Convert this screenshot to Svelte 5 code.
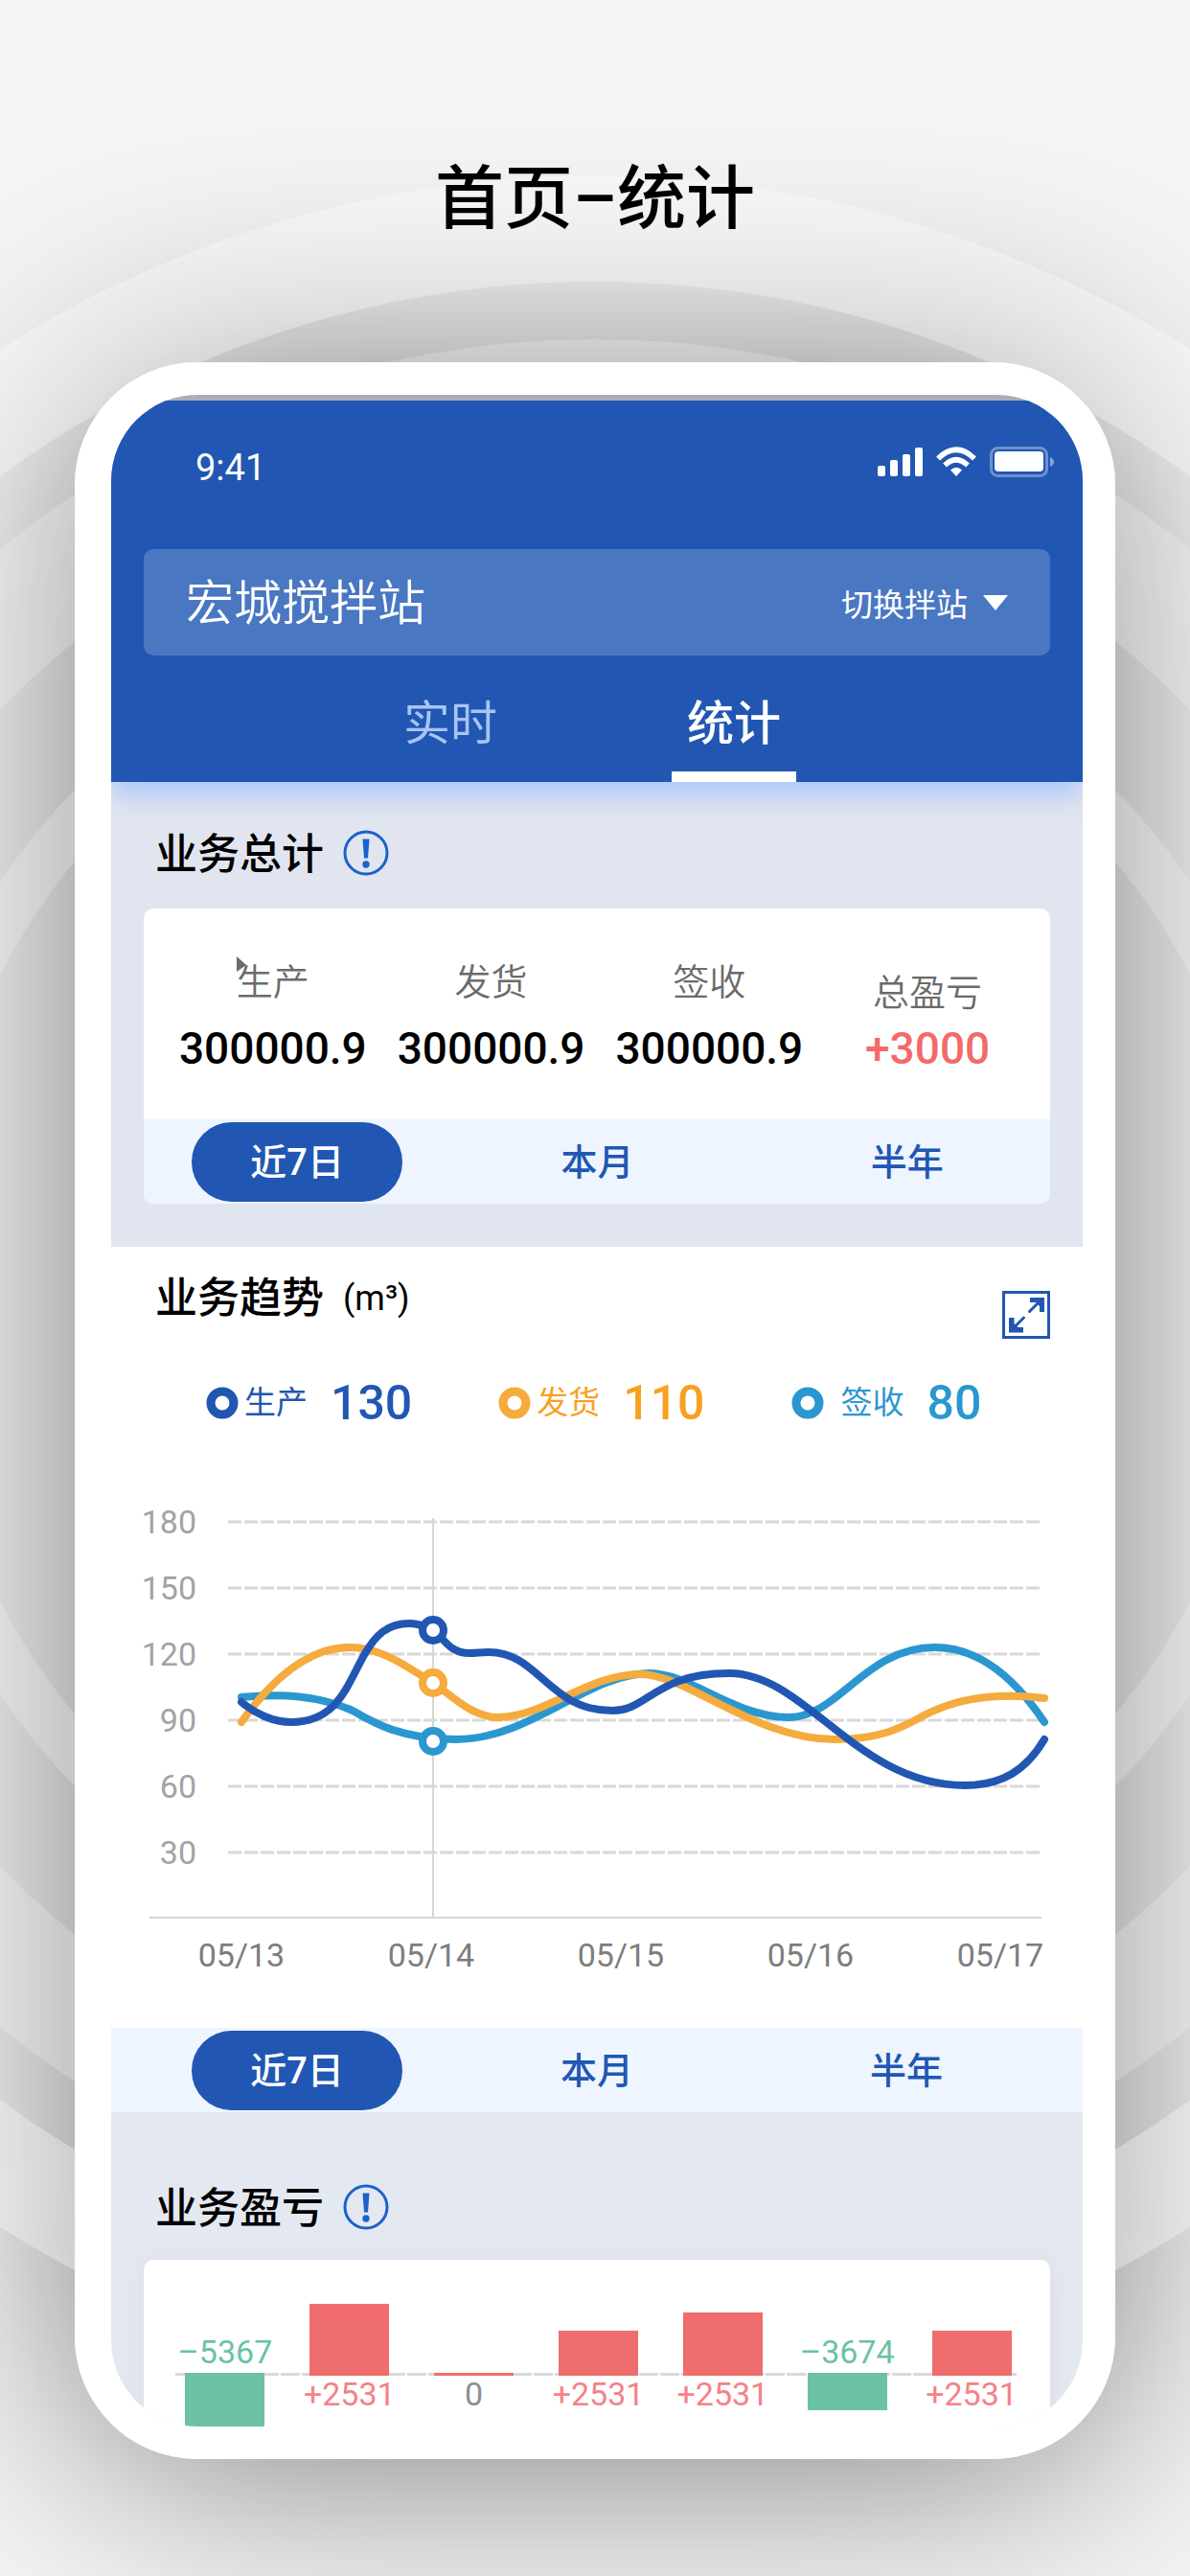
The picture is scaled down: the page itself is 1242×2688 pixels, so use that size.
<script lang="ts">
	interface Stat {
		label: string;
		value: string;
		total?: boolean;
	}

	interface Series {
		name: string;
		value: number;
		color: string;
		ring: string;
		path: string;
		y: number;
		wide?: boolean;
	}

	interface Profit {
		id: number;
		label: string;
		size: number;
		kind: 'gain' | 'loss' | 'zero';
	}

	const ranges: string[] = ['近7日', '本月', '半年'];
	const tabs: string[] = ['实时', '统计'];

	const stats: Stat[] = [
		{ label: '生产', value: '300000.9' },
		{ label: '发货', value: '300000.9' },
		{ label: '签收', value: '300000.9' },
		{ label: '总盈亏', value: '+3000', total: true }
	];

	const series: Series[] = [
		{
			name: '生产',
			value: 130,
			color: '#2157b2',
			ring: '#2157b2',
			y: 141,
			path: 'M136 216C150 228 169 237 188 237C236 237 246 199 264 167C276 146 288 134 312 134C320 134 326 136 336 141C347 148 352 165 374 165C382 165 386 164 394 164C447 164 456 225 523 225C561 225 567 186 645 186C725 186 778 303 891 303C930 303 955 287 974 255'
		},
		{
			name: '发货',
			value: 110,
			color: '#f8a01f',
			ring: '#f5ab3d',
			y: 196,
			path: 'M136 237C168 192 205 159 249 159C284 159 312 182 336 196C360 213 378 232 404 232C452 232 498 187 552 187C602 187 671 255 755 255C817 255 836 234 859 225C890 211 930 207 974 212'
		},
		{
			name: '签收',
			value: 80,
			color: '#2b97d0',
			ring: '#2b97d0',
			y: 257,
			wide: true,
			path: 'M136 211C178 207 216 209 252 225C274 238 304 255 360 255C438 255 498 186 562 186C605 186 650 232 707 232C760 232 786 159 860 159C905 159 943 191 974 237'
		}
	];

	const levels: number[] = [180, 150, 120, 90, 60, 30];
	const dates: string[] = ['05/13', '05/14', '05/15', '05/16', '05/17'];

	const profits: Profit[] = [
		{ id: 1, label: '–5367', size: 56, kind: 'loss' },
		{ id: 2, label: '+2531', size: 75, kind: 'gain' },
		{ id: 3, label: '0', size: 3, kind: 'zero' },
		{ id: 4, label: '+2531', size: 47, kind: 'gain' },
		{ id: 5, label: '+2531', size: 66, kind: 'gain' },
		{ id: 6, label: '–3674', size: 39, kind: 'loss' },
		{ id: 7, label: '+2531', size: 47, kind: 'gain' }
	];

	let activeTab: string = $state('统计');
	let totalRange: string = $state('近7日');
	let trendRange: string = $state('近7日');
</script>

{#snippet infoButton(name: string)}
	<button type="button" class="info" aria-label={name}>
		<svg viewBox="0 0 48 48" aria-hidden="true">
			<circle cx="24" cy="24" r="22" fill="none" stroke="currentColor" stroke-width="3" />
			<path d="M20.500 9.500h7l-1.500 20h-4z" fill="currentColor" />
			<circle cx="24" cy="36" r="3.700" fill="currentColor" />
		</svg>
	</button>
{/snippet}

{#snippet ring(color: string)}
	<svg class="ring" viewBox="0 0 34 34" aria-hidden="true">
		<circle cx="17" cy="17" r="12" fill="#fff" stroke={color} stroke-width="9" />
	</svg>
{/snippet}

<div class="page">
	<svg class="waves" viewBox="0 0 2400 2400" aria-hidden="true">
		<circle cx="1200" cy="1200" r="1105" stroke-width="110" stroke-opacity="0.32" />
		<circle cx="1200" cy="1200" r="928" stroke-width="124" stroke-opacity="0.2" />
		<circle cx="1200" cy="1200" r="727" stroke-width="50" stroke-opacity="0.2" />
	</svg>

	<h1>首页–统计</h1>

	<main class="device">
		<div class="screen">
			<header class="top">
				<div class="status">
					<time>9:41</time>
					<svg class="status-icons" viewBox="0 0 184 32" aria-hidden="true">
						<g fill="#fff">
							<rect x="0" y="20" width="8" height="11" rx="2" />
							<rect x="13" y="14" width="8" height="17" rx="2" />
							<rect x="26" y="8" width="8" height="23" rx="2" />
							<rect x="39" y="1" width="8" height="30" rx="2" />
							<path d="M82 31l-6-6.500q6-5.500 12 0z" />
						</g>
						<g fill="none" stroke="#fff" stroke-width="5.500">
							<path d="M63 12.500Q82-6 101 12.500" />
							<path d="M70 19.500Q82 8 94 19.500" />
						</g>
						<rect
							x="118.500" y="1.500" width="58" height="29" rx="7"
							fill="none" stroke="#fff" stroke-opacity="0.35" stroke-width="3"
						/>
						<rect x="122" y="5" width="51" height="21" rx="4" fill="#fff" />
						<path d="M180 11q4 2 4 5t-4 5z" fill="#fff" fill-opacity="0.45" />
					</svg>
				</div>

				<div class="station">
					<span class="station-name">宏城搅拌站</span>
					<button type="button" class="switch">
						切换拌站
						<svg viewBox="0 0 26 16" aria-hidden="true"><path d="M0 0h26L13 16z" fill="#fff" /></svg>
					</button>
				</div>

				<nav class="tabs">
					{#each tabs as tab (tab)}
						<button
							type="button"
							class:active={tab === activeTab}
							onclick={() => (activeTab = tab)}
						>
							{tab}
						</button>
					{/each}
				</nav>
			</header>

			<section class="totals">
				<div class="heading">
					<h2>业务总计</h2>
					{@render infoButton('业务总计')}
				</div>
				<div class="card">
					<div class="stats">
						{#each stats as stat (stat.label)}
							<div class="stat" class:total={stat.total}>
								<span class="stat-label">{stat.label}</span>
								<strong>{stat.value}</strong>
							</div>
						{/each}
						<svg class="pointer" viewBox="0 0 10 16" aria-hidden="true">
							<path d="M0 0l10 9L0 16z" fill="#6b6b6b" />
						</svg>
					</div>
					<div class="ranges">
						{#each ranges as range (range)}
							<button
								type="button"
								class:active={range === totalRange}
								onclick={() => (totalRange = range)}
							>
								{range}
							</button>
						{/each}
					</div>
				</div>
			</section>

			<section class="trend">
				<div class="trend-head">
					<div class="heading">
						<h2>业务趋势</h2>
						<span class="unit">(m³)</span>
					</div>
					<button type="button" class="expand" aria-label="全屏">
						<svg viewBox="0 0 50 50" aria-hidden="true">
							<rect x="1.500" y="1.500" width="47" height="47" fill="none" stroke="currentColor" stroke-width="3" />
							<path d="M28.500 21.500L39 11M22.500 28L12 38.500" stroke="currentColor" stroke-width="3" stroke-linecap="round" />
							<path d="M29 7h15v15h-5v-6l-4-4h-6zM7 28h5.500v6l4 4H22v5.500H7z" fill="currentColor" />
						</svg>
					</button>
				</div>

				<ul class="legend">
					{#each series as item (item.name)}
						<li class:wide={item.wide} style:color={item.color}>
							{@render ring(item.ring)}
							<span>{item.name}</span>
							<strong>{item.value}</strong>
						</li>
					{/each}
				</ul>

				<svg class="chart" viewBox="0 0 1014 556" role="img" aria-label="业务趋势">
					{#each levels as level, i (level)}
						<line class="grid" x1="122" x2="971" y1={28 + i * 69} y2={28 + i * 69} />
						<text class="level" x="89" y={40 + i * 69}>{level}</text>
					{/each}
					<line class="axis" x1="40" x2="971" y1="441" y2="441" />
					<line class="axis" x1="336" x2="336" y1="24" y2="441" />
					{#each dates as date, i (date)}
						<text class="date" x={136 + i * 198} y="492">{date}</text>
					{/each}
					{#each [...series].reverse() as item (item.name)}
						<path class="curve" d={item.path} stroke={item.ring} />
					{/each}
					{#each series as item (item.name)}
						<circle cx="336" cy={item.y} r="11" fill="#fff" stroke={item.ring} stroke-width="8" />
					{/each}
				</svg>

				<div class="ranges full">
					{#each ranges as range (range)}
						<button
							type="button"
							class:active={range === trendRange}
							onclick={() => (trendRange = range)}
						>
							{range}
						</button>
					{/each}
				</div>
			</section>

			<section class="profit">
				<div class="heading">
					<h2>业务盈亏</h2>
					{@render infoButton('业务盈亏')}
				</div>
				<div class="bars">
					{#each profits as item (item.id)}
						<div class="bar-col {item.kind}">
							<div class="above">
								{#if item.kind === 'loss'}
									<span>{item.label}</span>
								{:else}
									<i class="bar" style:height="{item.size}px"></i>
								{/if}
							</div>
							<div class="below">
								{#if item.kind === 'loss'}
									<i class="bar" style:height="{item.size}px"></i>
								{:else}
									<span>{item.label}</span>
								{/if}
							</div>
						</div>
					{/each}
				</div>
			</section>
		</div>
	</main>
</div>

<style>
	:global(body) {
		margin: 0;
	}

	.page {
		position: relative;
		isolation: isolate;
		overflow: hidden;
		box-sizing: border-box;
		min-height: 100vh;
		padding: 158px 78px 122px;
		background: #f5f5f5;
		font-family: Roboto, 'Noto Sans CJK SC', sans-serif;
		color: #000;
	}

	/* rings sit between the device's shadow and the device */
	.waves {
		position: absolute;
		z-index: -1;
		top: 144px;
		left: calc(50% - 1200px);
		width: 2400px;
		height: 2400px;
		fill: none;
		stroke: #fff;
	}

	h1 {
		margin: 0 0 120px;
		font-size: 72px;
		line-height: 100px;
		font-weight: 500;
		text-align: center;
	}

	.device {
		position: relative;
		padding: 34px 34px 34px 38px;
		border-radius: 128px;
		background: #fff;
	}

	.device::before {
		content: '';
		position: absolute;
		z-index: -2;
		inset: 0;
		border-radius: 128px;
		box-shadow: 0 8px 240px rgba(0, 0, 0, 0.5);
	}

	.screen {
		overflow: hidden;
		padding-top: 6px;
		border-radius: 90px;
		background: linear-gradient(#aaa 0 90px, #fff 90px);
	}

	button {
		padding: 0;
		border: 0;
		background: none;
		font: inherit;
		color: inherit;
		cursor: pointer;
	}

	svg {
		display: block;
	}

	.top {
		position: relative;
		padding: 46px 34px 0;
		background: #2157b2;
		color: #fff;
		box-shadow: 0 12px 28px #a6c4fb;
	}

	.status {
		display: flex;
		justify-content: space-between;
		padding-left: 54px;
		margin: 0 -4px 61px 0;
	}

	.status time {
		font-size: 38px;
		line-height: 48px;
	}

	.status-icons {
		width: 184px;
		height: 32px;
		margin-top: 2px;
	}

	.station {
		display: flex;
		align-items: center;
		justify-content: space-between;
		height: 111px;
		padding: 0 44px;
		border-radius: 10px;
		background: #4a77c2;
	}

	.station-name {
		padding-bottom: 8px;
		font-size: 50px;
		font-weight: 350;
	}

	.switch {
		display: flex;
		align-items: center;
		gap: 16px;
		font-size: 33px;
	}

	.switch svg {
		width: 26px;
		height: 16px;
	}

	.tabs {
		display: flex;
		justify-content: center;
		gap: 166px;
		padding-right: 10px;
	}

	.tabs button {
		width: 130px;
		padding: 40px 0 17px;
		border-bottom: 11px solid transparent;
		font-size: 49px;
		line-height: 64px;
		color: #a8c4f2;
	}

	.tabs button.active {
		border-color: #fff;
		font-weight: 500;
		color: #fff;
	}

	section {
		background: #e1e5ef;
	}

	.heading {
		display: flex;
		align-items: center;
		gap: 20px;
		height: 48px;
		padding-left: 12px;
	}

	h2 {
		margin: 0;
		padding-top: 4px;
		font-size: 44px;
		line-height: 48px;
		font-weight: 500;
	}

	.info {
		width: 48px;
		height: 48px;
		color: #1a62cc;
	}

	.totals {
		padding: 50px 34px 45px;
	}

	.card {
		overflow: hidden;
		margin-top: 34px;
		border-radius: 10px;
		background: #fff;
	}

	.stats {
		position: relative;
		display: flex;
		align-items: flex-end;
		box-sizing: border-box;
		height: 220px;
		padding: 0 14px 50px 21px;
	}

	.stat {
		display: flex;
		flex: 1;
		flex-direction: column;
		align-items: center;
		gap: 23px;
	}

	.stat-label {
		font-size: 38px;
		line-height: 44px;
		font-weight: 350;
		color: #6b6b6b;
	}

	.stat strong {
		font-size: 46px;
		line-height: 48px;
		font-weight: 500;
	}

	.stat.total {
		gap: 12px;
	}

	.stat.total strong {
		color: #f26a6a;
	}

	.pointer {
		position: absolute;
		top: 50px;
		left: 97px;
		width: 10px;
		height: 16px;
	}

	.ranges {
		display: grid;
		grid-template-columns: 220fr 406fr 240fr;
		align-items: center;
		justify-items: center;
		height: 88px;
		padding: 0 29px 0 50px;
		background: #eef5fe;
	}

	.ranges.full {
		padding: 0 64px 0 84px;
	}

	.ranges button {
		width: 220px;
		height: 83px;
		padding-bottom: 6px;
		border-radius: 42px;
		font-size: 38px;
		font-weight: 500;
		color: #2157b2;
	}

	.ranges button.active {
		background: #2157b2;
		color: #fff;
	}

	.trend {
		padding-top: 28px;
		background: #fff;
	}

	.trend-head {
		display: flex;
		align-items: flex-start;
		justify-content: space-between;
		padding: 0 34px;
	}

	.unit {
		padding-top: 4px;
		font-size: 36px;
	}

	.expand {
		width: 50px;
		height: 50px;
		margin-top: 18px;
		color: #2157b2;
	}

	.legend {
		display: flex;
		gap: 90px;
		margin: 39px 0 68px;
		padding: 0 0 0 99px;
		list-style: none;
	}

	.legend li {
		display: flex;
		align-items: center;
		gap: 6px;
		font-size: 33px;
		line-height: 56px;
	}

	.legend li.wide {
		gap: 18px;
	}

	.legend strong {
		margin-left: 18px;
		font-size: 50px;
		font-weight: 500;
	}

	.legend .wide strong {
		margin-left: 6px;
	}

	.ring {
		width: 34px;
		height: 34px;
	}

	.chart {
		width: 100%;
	}

	.grid {
		stroke: #d8d8d8;
		stroke-width: 3px;
		stroke-dasharray: 14 3;
	}

	.axis {
		stroke: #d6d6d6;
		stroke-width: 2px;
	}

	.level {
		fill: #a3a3a3;
		font-size: 34px;
		text-anchor: end;
	}

	.date {
		fill: #7d7d7d;
		font-size: 34px;
		text-anchor: middle;
	}

	.curve {
		fill: none;
		stroke-width: 8px;
		stroke-linecap: round;
	}

	.profit {
		padding: 75px 34px 0;
		background: #e4e8f0;
	}

	.bars {
		position: relative;
		isolation: isolate;
		display: flex;
		margin-top: 31px;
		padding: 0 17px 0 20px;
		border-radius: 10px 10px 0 0;
		background: #fff;
		box-shadow: 0 0 30px rgba(0, 0, 0, 0.05);
	}

	.bars::before {
		content: '';
		position: absolute;
		z-index: -1;
		top: 118px;
		left: 33px;
		right: 33px;
		height: 3px;
		background: repeating-linear-gradient(90deg, #d9d9d9 0 20px, #fff 20px 22px);
	}

	.bar-col {
		flex: 1;
		font-size: 34px;
		line-height: 38px;
	}

	.above,
	.below {
		display: flex;
		flex-direction: column;
		align-items: center;
	}

	.above {
		justify-content: flex-end;
		height: 121px;
	}

	.below {
		height: 53px;
	}

	.above span {
		padding-bottom: 6px;
	}

	.bar {
		flex: none;
		width: 83px;
	}

	.loss {
		color: #6bc2a4;
	}

	.loss .bar {
		margin-top: -3px;
		background: #6bc2a4;
	}

	.gain {
		color: #f58288;
	}

	.gain .bar,
	.zero .bar {
		background: #ef6d6d;
	}

	.zero {
		color: #8e8e8e;
	}
</style>
